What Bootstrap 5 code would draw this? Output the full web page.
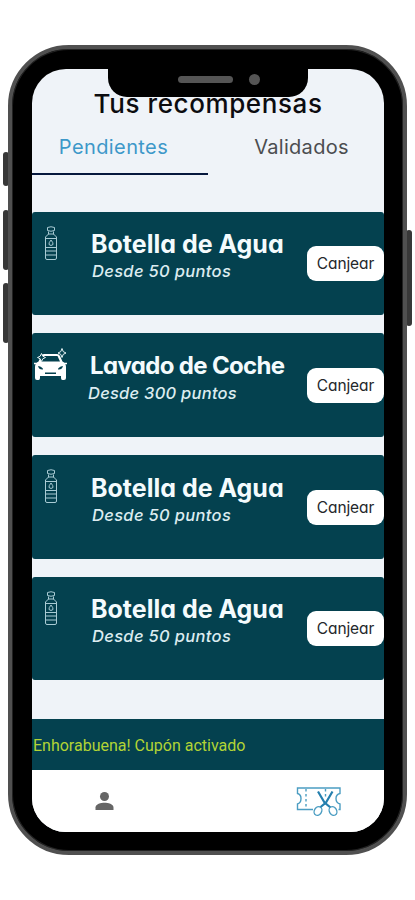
<!DOCTYPE html>
<html lang="es">
<head>
<meta charset="utf-8">
<meta name="viewport" content="width=device-width, initial-scale=1">
<title>Tus recompensas</title>
<link href="https://cdn.jsdelivr.net/npm/bootstrap@5.3.0/dist/css/bootstrap.min.css" rel="stylesheet">
<style>
body{background:#fff;font-family:Inter,sans-serif;width:415px;height:900px;overflow:hidden;padding:45px 8px}
.phone{width:399px;height:810px;background:#000;border:4px solid #505050;border-radius:61px;padding:20px 19px 20px 20px;box-shadow:inset 0 0 0 1px #222}
.side-key{background:#383838;position:absolute;width:6px;border-radius:3px}
.key-mute{left:3px;top:152px;height:34px}
.key-up{left:3px;top:210px;height:60px}
.key-down{left:3px;top:283px;height:60px}
.key-power{left:406px;top:230px;height:96px}
.screen{height:763px;background:#eff3f8;border-radius:34px;overflow:hidden}
.notch{left:76px;top:-1px;width:200px;height:29px;background:#000;border-radius:0 0 19px 19px}
.speaker{width:55px;height:7px;border-radius:4px;background:#555;margin:-6px 0 0 70px}
.camera{width:11px;height:11px;border-radius:50%;background:#555;margin:-6px 0 0 16px}
.head{height:142.5px}
.title{font-size:26px;line-height:32px;font-weight:500;letter-spacing:.6px;padding-top:19px;color:#0c0c10;white-space:nowrap}
.tab{height:55px;width:176px;font-size:20px;line-height:24px;padding-top:15px;letter-spacing:.4px;text-align:center;color:#4b4d50;white-space:nowrap}
.tab-on{color:#3d98c9;border-bottom:2px solid #06183d;padding-right:13px}
.tab-off{padding-left:11px;letter-spacing:.3px}
.rewards{gap:18.3px}
.reward{height:103.5px;background:#04414f;border-radius:3px}
.pic{width:55px;flex:none}
.pic svg{display:block}
.bottle{margin:14px 0 0 12px}
.car{margin:15px 0 0 2px}
.name{font-weight:700;font-size:25px;line-height:30px;color:#f4fbfd;margin:17.5px 0 0 4px;white-space:nowrap;font-feature-settings:"cv11"}
.pts{font-style:italic;font-size:16.5px;line-height:22px;letter-spacing:.33px;font-weight:500;color:#dcecf0;margin:1px 0 0 5px;white-space:nowrap;font-feature-settings:"cv11"}
.name-car{margin-left:3px;font-size:24px;letter-spacing:-.65px}
.pts-car{margin-left:1px;letter-spacing:.25px}
.redeem{width:77px;height:35px;margin-top:34.5px;background:#fff;border-radius:9px;font-size:15.5px;letter-spacing:-.1px;color:#24272b;font-feature-settings:"cv11";padding:1px 0 0;border:0;line-height:34px}
.toast-bar{height:51px;margin-top:38.5px;background:#04414f;color:#b2d435;font-family:Roboto,sans-serif;font-size:16px;padding:3px 0 0 1px;white-space:nowrap}
.tabbar{height:62px;background:#fff}
.ico-user{margin:21px 0 0 62px}
.ico-coupon{margin:16px 42px 0 0}
</style>
<script src="https://cdn.jsdelivr.net/npm/bootstrap@5.3.0/dist/js/bootstrap.bundle.min.js"></script>
</head>
<body>
<svg class="d-none" xmlns="http://www.w3.org/2000/svg">
<symbol id="bottle" viewBox="0 0 14 35"><g fill="none" stroke="#a9cbd4" stroke-width="1"><path d="M3.5 1.5Q7 0 10.5 1.5V4.5Q7 6 3.5 4.5ZM4.5 5.5V8L1.5 11V32Q1.5 33.5 3 33.5H11Q12.5 33.5 12.5 32V11L9.5 8V5.5M1.5 12.5H12.5M1.5 21.500H12.500M1.500 25H12.500M1.500 29H12.500M4 8H10"/><path d="M7 14Q4.500 17 5 18.500Q7 20.500 9 18.500Q9.500 17 7 14Z"/></g></symbol>
</svg>
<i class="side-key key-mute"></i><i class="side-key key-up"></i><i class="side-key key-down"></i><i class="side-key key-power"></i>
<main class="phone position-relative">
<div class="screen w-100 position-relative d-flex flex-column">
<div class="notch position-absolute d-flex align-items-center"><span class="speaker"></span><span class="camera"></span></div>
<header class="head"><h1 class="title text-center m-0">Tus recompensas</h1>
<nav class="d-flex"><div class="tab tab-on">Pendientes</div><div class="tab tab-off">Validados</div></nav></header>
<section class="rewards d-flex flex-column">
<article class="reward d-flex"><div class="pic"><svg class="bottle" width="14" height="35"><use href="#bottle"/></svg></div><div class="flex-grow-1"><h2 class="name mb-0">Botella de Agua</h2><p class="pts mb-0">Desde 50 puntos</p></div><button class="btn redeem">Canjear</button></article>
<article class="reward d-flex"><div class="pic"><svg class="car" width="33" height="34" viewBox="0 0 33 34"><path fill="#fff" fill-rule="evenodd" d="M10 6H23Q25 6 26 8L28.500 13.500Q32 15 32 19V30Q32 32 30 32H28.500Q27 32 27 30V28H6V30Q6 32 4.500 32H3Q1 32 1 30V19Q1 15 4.500 13.500L7 8Q8 6 10 6ZM9.500 8L7 13.500H26L23.500 8ZM4 18Q5 22 9 21.500Q9 19 4 18ZM29 18Q24 19 24 21.500Q28 22 29 18ZM11 24.500V26H22V24.500Z"/><path fill="#04414f" stroke="#e8f4f6" d="M28 0.500L29.200 3.600L32 5L29.200 6.400L28 9.500L26.800 6.400L24 5L26.800 3.600ZM7.500 5.500L8.800 8.200L11.500 9.500L8.800 10.800L7.500 13.500L6.200 10.800L3.500 9.500L6.200 8.200Z"/><path stroke="#fff" stroke-width="1.500" d="M0 15.500H4M29 15.500H33"/></svg></div><div class="flex-grow-1"><h2 class="name name-car mb-0">Lavado de Coche</h2><p class="pts pts-car mb-0">Desde 300 puntos</p></div><button class="btn redeem">Canjear</button></article>
<article class="reward d-flex"><div class="pic"><svg class="bottle" width="14" height="35"><use href="#bottle"/></svg></div><div class="flex-grow-1"><h2 class="name mb-0">Botella de Agua</h2><p class="pts mb-0">Desde 50 puntos</p></div><button class="btn redeem">Canjear</button></article>
<article class="reward d-flex"><div class="pic"><svg class="bottle" width="14" height="35"><use href="#bottle"/></svg></div><div class="flex-grow-1"><h2 class="name mb-0">Botella de Agua</h2><p class="pts mb-0">Desde 50 puntos</p></div><button class="btn redeem">Canjear</button></article>
</section>
<div class="toast-bar d-flex align-items-center">Enhorabuena! Cupón activado</div>
<footer class="tabbar d-flex justify-content-between">
<svg class="ico-user" width="20" height="20" viewBox="0 0 20 20"><circle cx="10.500" cy="5.500" r="4.500" fill="#666"/><path d="M1.500 19V16.500C1.500 13 7 11.700 10.500 11.700S19.500 13 19.500 16.500V19Z" fill="#666"/></svg>
<svg class="ico-coupon" width="46" height="31" viewBox="0 0 46 31" fill="none" stroke="#4b9dc2" stroke-width="1.400"><path d="M17 23.500H1.500V18Q5 17 5 12.500Q5 8.500 1.500 7.500V2H44V7.500Q40 8.500 40 12.500Q40 17 44 18V23.500H42.500"/><path stroke-dasharray="2.500 2.500" d="M10 3V23M29.500 3V11"/><path stroke="#257fae" stroke-width="2.200" d="M22 5.500L28.500 16.500L34.500 21.500M36.500 5.500L30 16.500L24 21.500"/><ellipse cx="22" cy="25" rx="3.600" ry="4.600" transform="rotate(30 22 25)"/><ellipse cx="37" cy="25" rx="3.600" ry="4.600" transform="rotate(-30 37 25)"/></svg>
</footer>
</div>
</main>
</body>
</html>
